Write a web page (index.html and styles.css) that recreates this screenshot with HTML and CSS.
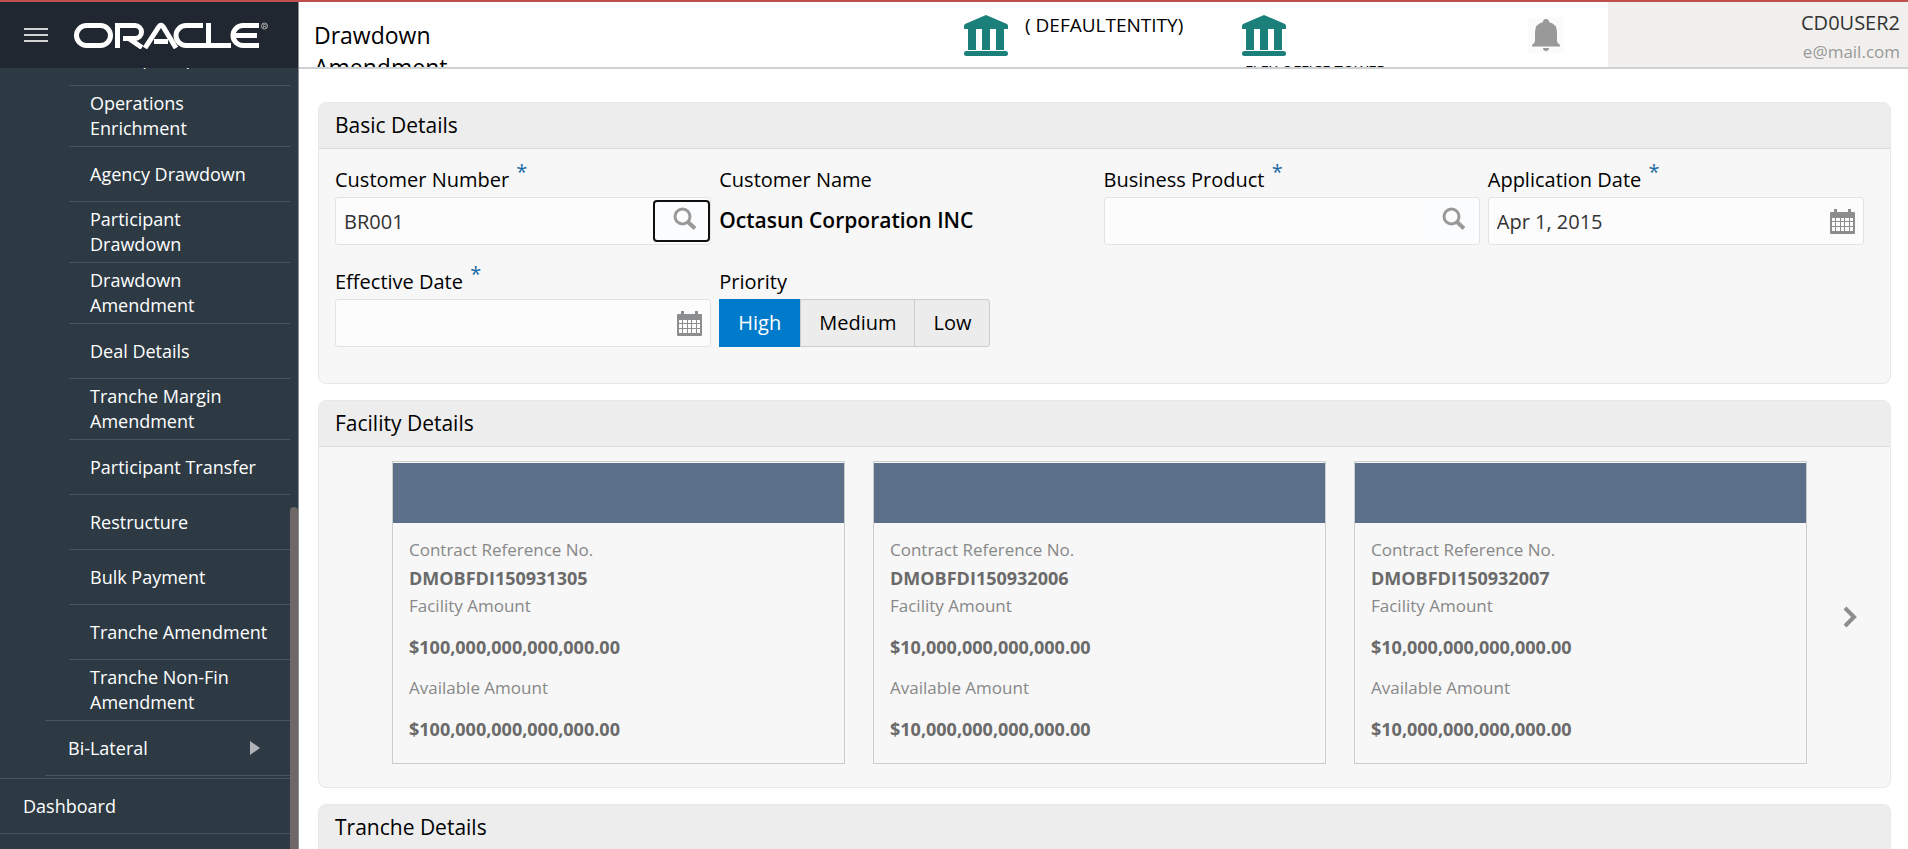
FILE: index.html
```html
<!DOCTYPE html>
<html lang="en">
<head>
    <meta charset="utf-8">
    <title>Drawdown Amendment</title>
    <link rel="stylesheet" href="styles.css">
</head>
<body>
    <!-- shared icons -->
    <svg class="sprite" aria-hidden="true">
        <symbol id="icon-bank" viewBox="0 0 44 42">
            <path d="M22 0 L43 9 Q44 10 44 11 V14 H0 V11 Q0 10 1 9 Z"/>
            <path d="M4 14h8v21H4zM18 14h8v21h-8zM32 14h8v21h-8z"/>
            <rect x="0" y="36" width="44" height="5" rx="2.5"/>
        </symbol>
        <symbol id="icon-search" viewBox="0 0 24 24">
            <circle cx="9.500" cy="9.500" r="7.500" fill="none" stroke="#999" stroke-width="3"/>
            <path d="M15 15 L22 21.500" stroke="#999" stroke-width="4" fill="none"/>
        </symbol>
        <symbol id="icon-calendar" viewBox="0 0 25 25">
            <path fill="#8b8d8e" fill-rule="evenodd" d="M4 0h3v3h11V0h3v3h3q1 0 1 1v20q0 1-1 1H1q-1 0-1-1V4q0-1 1-1h3zM2 9v3h3V9zM6 9v3h4V9zM11 9v3h3V9zM15 9v3h4V9zM20 9v3h3V9zM2 13v4h3v-4zM6 13v4h4v-4zM11 13v4h3v-4zM15 13v4h4v-4zM20 13v4h3v-4zM2 18v4h3v-4zM6 18v4h4v-4zM11 18v4h3v-4zM15 18v4h4v-4zM20 18v4h3v-4z"/>
        </symbol>
    </svg>

    <div class="app">
        <aside class="sidebar">
            <div class="brand">
                <button class="menu-btn" type="button" aria-label="Menu"><span></span><span></span><span></span></button>
                <svg class="logo" viewBox="0 0 195 27" role="img" aria-label="Oracle">
                    <g fill="none" stroke="#fff" stroke-width="5">
                        <rect x="2.500" y="3.500" width="34" height="20" rx="10"/>
                        <path d="M43.500 26V3.500H61a6.500 6.500 0 0 1 0 13H49M54 16l14 9.500"/>
                        <path d="M71 26L85 4.500Q87 2 89 4.500L102 26M80 19.500H94"/>
                        <path d="M129 3.500H112a10 10 0 0 0 0 20H157M134.500 1V23.500"/>
                        <path d="M185 3.500H169a10 10 0 0 0 0 20H185M161 13.500H183"/>
                    </g>
                    <circle cx="190.500" cy="4" r="3" fill="none" stroke="#aaa" stroke-width="1"/>
                    <path d="M189.500 6V2.500h1.500a1 1 0 0 1 0 2h-1.500M191 4.500l1 1.500" fill="none" stroke="#aaa" stroke-width="0.700"/>
                </svg>
            </div>
            <nav class="menu">
                <ul class="level-3">
                    <li><a href="#">Participant pool</a></li>
                    <li class="tall"><a href="#">Operations Enrichment</a></li>
                    <li><a href="#">Agency Drawdown</a></li>
                    <li class="tall"><a href="#">Participant Drawdown</a></li>
                    <li class="tall"><a href="#">Drawdown Amendment</a></li>
                    <li><a href="#">Deal Details</a></li>
                    <li class="tall"><a href="#">Tranche Margin Amendment</a></li>
                    <li><a href="#">Participant Transfer</a></li>
                    <li><a href="#">Restructure</a></li>
                    <li><a href="#">Bulk Payment</a></li>
                    <li><a href="#">Tranche Amendment</a></li>
                    <li class="tall"><a href="#">Tranche Non-Fin Amendment</a></li>
                </ul>
                <ul class="level-2">
                    <li><a href="#">Bi-Lateral <span class="arrow"></span></a></li>
                </ul>
                <ul class="level-1">
                    <li><a href="#">Dashboard</a></li>
                </ul>
                <div class="scroll-thumb"></div>
            </nav>
        </aside>

        <div class="content">
            <header class="topbar">
                <h1>Drawdown Amendment</h1>
                <div class="entity">
                    <svg class="bank"><use href="#icon-bank"/></svg>
                    <span>( DEFAULTENTITY)</span>
                </div>
                <div class="branch">
                    <svg class="bank"><use href="#icon-bank"/></svg>
                    <span>FLEX OFFICE TOWER</span>
                </div>
                <button class="bell" type="button" aria-label="Notifications">
                    <svg viewBox="0 0 28 32">
                        <path fill="#999" d="M14 0a3 3 0 0 1 3 3Q25 5 25 13V22Q25 24 28 26V27.500H0V26Q3 24 3 22V13Q3 5 11 3A3 3 0 0 1 14 0ZM11 29h6a3 3 0 0 1-6 0Z"/>
                    </svg>
                </button>
                <div class="user">
                    <div class="user-name">CD0USER2</div>
                    <div class="user-mail">e@mail.com</div>
                </div>
            </header>

            <main>
                <section class="panel">
                    <h2>Basic Details</h2>
                    <form class="form-grid">
                        <div class="field">
                            <label for="custNo">Customer Number <sup>*</sup></label>
                            <div class="control">
                                <input type="text" id="custNo" value="BR001">
                                <button class="lookup focused" type="button" aria-label="Search customer"><svg><use href="#icon-search"/></svg></button>
                            </div>
                        </div>
                        <div class="field">
                            <label for="custName">Customer Name</label>
                            <output id="custName">Octasun Corporation INC</output>
                        </div>
                        <div class="field">
                            <label for="product">Business Product <sup>*</sup></label>
                            <div class="control">
                                <input type="text" id="product">
                                <button class="lookup" type="button" aria-label="Search product"><svg><use href="#icon-search"/></svg></button>
                            </div>
                        </div>
                        <div class="field">
                            <label for="appDate">Application Date <sup>*</sup></label>
                            <div class="control">
                                <input type="text" id="appDate" value="Apr 1, 2015">
                                <button class="picker" type="button" aria-label="Pick application date"><svg><use href="#icon-calendar"/></svg></button>
                            </div>
                        </div>
                        <div class="field">
                            <label for="effDate">Effective Date <sup>*</sup></label>
                            <div class="control">
                                <input type="text" id="effDate">
                                <button class="picker" type="button" aria-label="Pick effective date"><svg><use href="#icon-calendar"/></svg></button>
                            </div>
                        </div>
                        <div class="field" role="radiogroup" aria-labelledby="priorityLabel">
                            <span class="label" id="priorityLabel">Priority</span>
                            <div class="segments">
                                <input type="radio" name="priority" id="high" checked><label for="high">High</label>
                                <input type="radio" name="priority" id="medium"><label for="medium">Medium</label>
                                <input type="radio" name="priority" id="low"><label for="low">Low</label>
                            </div>
                        </div>
                    </form>
                </section>

                <section class="panel">
                    <h2>Facility Details</h2>
                    <div class="carousel">
                        <article class="card">
                            <div class="card-band"></div>
                            <dl>
                                <dt>Contract Reference No.</dt>
                                <dd>DMOBFDI150931305</dd>
                                <dt>Facility Amount</dt>
                                <dd class="amount">$100,000,000,000,000.00</dd>
                                <dt>Available Amount</dt>
                                <dd class="amount">$100,000,000,000,000.00</dd>
                            </dl>
                        </article>
                        <article class="card">
                            <div class="card-band"></div>
                            <dl>
                                <dt>Contract Reference No.</dt>
                                <dd>DMOBFDI150932006</dd>
                                <dt>Facility Amount</dt>
                                <dd class="amount">$10,000,000,000,000.00</dd>
                                <dt>Available Amount</dt>
                                <dd class="amount">$10,000,000,000,000.00</dd>
                            </dl>
                        </article>
                        <article class="card">
                            <div class="card-band"></div>
                            <dl>
                                <dt>Contract Reference No.</dt>
                                <dd>DMOBFDI150932007</dd>
                                <dt>Facility Amount</dt>
                                <dd class="amount">$10,000,000,000,000.00</dd>
                                <dt>Available Amount</dt>
                                <dd class="amount">$10,000,000,000,000.00</dd>
                            </dl>
                        </article>
                        <button class="next" type="button" aria-label="Next">
                            <svg viewBox="0 0 14 22"><path d="M2 2l9 9-9 9" fill="none" stroke="#8b8d8e" stroke-width="4"/></svg>
                        </button>
                    </div>
                </section>

                <section class="panel">
                    <h2>Tranche Details</h2>
                </section>
            </main>
        </div>
    </div>
</body>
</html>
```

FILE: styles.css
```css
* {
    box-sizing: border-box;
}

body {
    margin: 0;
    height: 100vh;
    overflow: hidden;
    border-top: 2px solid #c0504d;
    background: #fff;
    color: #000;
    font-family: "Open Sans", "Noto Sans", sans-serif;
    font-size: 20px;
}

button,
input {
    font: inherit;
}

button {
    padding: 0;
    border: 0;
    background: none;
}

ul,
dl,
dd,
h1,
h2 {
    margin: 0;
    padding: 0;
    font-weight: 400;
}

ul {
    list-style: none;
}

.sprite {
    display: none;
}

.app {
    display: flex;
    height: 100%;
}

/* sidebar */
.sidebar {
    display: flex;
    flex-direction: column;
    width: 299px;
    flex: none;
    border-right: 1px solid #8a9096;
    background: #2d3a44;
}

.brand {
    display: flex;
    align-items: center;
    flex: none;
    height: 66px;
    padding-left: 24px;
    background: #212731;
}

.menu-btn {
    display: flex;
    flex-direction: column;
    gap: 4px;
    width: 24px;
    margin-right: 26px;
}

.menu-btn span {
    height: 2px;
    background: #d0d2d4;
}

.logo {
    width: 195px;
    height: 27px;
}

.menu {
    position: relative;
    display: flex;
    flex-direction: column;
    flex: 1;
    overflow: hidden;
    padding-right: 8px;
    font-size: 18px;
    line-height: 25px;
}

.menu li {
    display: flex;
    align-items: center;
    height: 55px;
    flex: none;
    border-bottom: 1px solid #465562;
}

.menu li.tall {
    height: 61px;
}

.menu a {
    display: flex;
    align-items: center;
    justify-content: space-between;
    flex: 1;
    color: #fff;
    text-decoration: none;
}

.level-3 {
    margin: -37px 0 -1px 69px;
}

.level-3 a {
    padding: 0 16px 0 21px;
}

.level-2 {
    margin-left: 45px;
    border-top: 1px solid #465562;
}

.level-2 a {
    padding: 0 30px 0 23px;
}

.level-1 {
    margin-top: 2px;
    border-top: 1px solid #465562;
}

.level-1 a {
    padding-left: 23px;
}

.arrow {
    border-left: 10px solid #b0b4b8;
    border-top: 7px solid transparent;
    border-bottom: 7px solid transparent;
}

.scroll-thumb {
    position: absolute;
    top: 439px;
    right: 0;
    bottom: 0;
    width: 8px;
    border-radius: 4px 4px 0 0;
    background: #6f6768;
}

/* top bar */
.content {
    display: flex;
    flex-direction: column;
    flex: 1;
    min-width: 0;
}

.topbar {
    display: flex;
    flex: none;
    height: 67px;
    overflow: hidden;
    border-bottom: 2px solid #cdd1d1;
}

.topbar h1 {
    flex: 1;
    padding: 17px 480px 0 15px;
    font-size: 23px;
    line-height: 32px;
}

.entity {
    display: flex;
    gap: 17px;
    width: 278px;
    padding-top: 13px;
    font-size: 19px;
    line-height: 20px;
}

.bank {
    flex: none;
    width: 44px;
    height: 42px;
    fill: #1b7f7a;
}

.branch {
    display: flex;
    flex-direction: column;
    gap: 2px;
    width: 286px;
    padding-top: 13px;
    font-size: 15px;
    line-height: 22px;
    white-space: nowrap;
}

.branch span {
    padding-left: 3px;
}

.bell {
    display: flex;
    align-items: center;
    justify-content: center;
    width: 36px;
    height: 36px;
    margin: 15px 44px 0 0;
    background: #fbfbfb;
}

.bell svg {
    width: 28px;
    height: 32px;
}

.user {
    width: 300px;
    padding: 7px 8px 0 0;
    background: #f1f0ee;
    text-align: right;
}

.user-name {
    color: #333;
    line-height: 28px;
}

.user-mail {
    color: #999;
    font-size: 17px;
    line-height: 30px;
}

/* panels */
main {
    display: flex;
    flex-direction: column;
    gap: 16px;
    padding: 33px 17px 0 19px;
}

.panel {
    border: 1px solid #e8e8e8;
    border-radius: 8px;
    background: #f7f7f7;
}

.panel:last-child {
    border-bottom: 0;
    border-radius: 8px 8px 0 0;
}

.panel h2 {
    padding: 0 16px;
    border-bottom: 1px solid #dcdcdc;
    border-radius: 7px 7px 0 0;
    background: #ededed;
    font-size: 21px;
    line-height: 45px;
}

.form-grid {
    display: grid;
    grid-template-columns: repeat(4, 1fr);
    gap: 22px 8px;
    padding: 16px 26px 36px 16px;
}

.field > label,
.label {
    display: block;
    height: 32px;
    line-height: 30px;
}

.field sup {
    margin-left: 2px;
    color: #1a6aa5;
    font-size: 20px;
    line-height: 0;
}

.control {
    display: flex;
    height: 48px;
    border: 1px solid #e3e3e3;
    border-radius: 3px;
    background: #fcfcfc;
}

.control input {
    flex: 1;
    min-width: 0;
    padding: 0 8px;
    border: 0;
    background: none;
    color: #333;
    outline: none;
}

.lookup {
    width: 57px;
    margin: 2px 0;
    border-radius: 4px;
    background: #fbfcfe;
}

.lookup.focused {
    border: 2px solid #101010;
}

.lookup svg {
    display: block;
    width: 24px;
    height: 24px;
    margin: 0 auto 4px 20px;
}

.lookup.focused svg {
    margin-left: 18px;
}

.picker {
    width: 40px;
}

.picker svg {
    display: block;
    width: 25px;
    height: 25px;
    margin-left: 7px;
}

.field output {
    display: block;
    font-size: 21px;
    font-weight: 600;
    line-height: 46px;
}

.segments {
    display: inline-flex;
    height: 48px;
    border: 1px solid #ccc;
    border-radius: 3px;
    background: #ececec;
}

.segments input {
    position: absolute;
    opacity: 0;
}

.segments label {
    padding: 0 18px;
    border-left: 1px solid #ccc;
    line-height: 46px;
}

.segments input:checked + label {
    margin: -1px 0 -1px -1px;
    padding: 0 19px;
    border: 0;
    background: #007aca;
    color: #fff;
    line-height: 48px;
}

/* facility cards */
.carousel {
    display: flex;
    gap: 28px;
    padding: 14px 26px 23px 73px;
}

.card {
    flex: 1;
    border: 1px solid #ccc;
    padding-top: 1px;
}

.card-band {
    height: 60px;
    background: #5d708a;
}

.card dl {
    padding: 13px 16px 20px;
    color: #6a6a6a;
    font-size: 17px;
    line-height: 28px;
}

.card dt {
    color: #888;
}

.card dd {
    font-size: 18px;
    font-weight: 700;
}

.card .amount {
    margin: 13px 0;
}

.card .amount:last-child {
    margin-bottom: 0;
}

.next {
    width: 29px;
}

.next svg {
    display: block;
    width: 14px;
    height: 22px;
    margin: 8px auto 0;
}
```
